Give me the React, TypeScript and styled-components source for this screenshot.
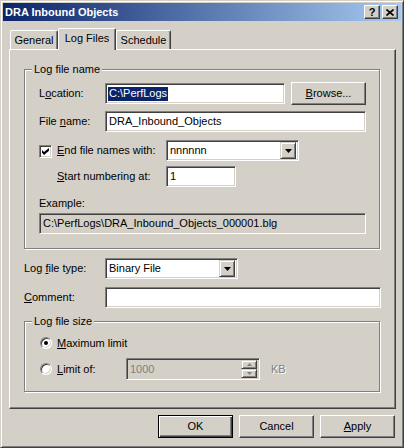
import React from 'react';
import styled, { createGlobalStyle } from 'styled-components';

const GlobalStyle = createGlobalStyle`
    html, body {
        margin: 0;
        padding: 0;
        background: #d4d0c8;
    }
    body {
        font-family: "Liberation Sans", Arial, sans-serif;
        font-size: 11px;
        color: #000;
    }
    * {
        box-sizing: border-box;
    }
`;

const Window = styled.div`
    width: 404px;
    height: 448px;
    padding: 2px;
    background: #d4d0c8;
    border: 1px solid;
    border-color: #d4d0c8 #404040 #404040 #d4d0c8;
    box-shadow: inset 1px 1px 0 #fff, inset -1px -1px 0 #808080;
    display: flex;
    flex-direction: column;
`;

const TitleBar = styled.div`
    height: 18px;
    padding: 0 3px 0 2px;
    display: flex;
    align-items: center;
    background: linear-gradient(to right, #0a246a, #a6caf0);
`;

const Title = styled.span`
    color: #fff;
    font-weight: bold;
    font-size: 11px;
    line-height: 13px;
`;

const CaptionButtons = styled.div`
    margin-left: auto;
    display: flex;
    gap: 2px;
`;

const CaptionButton = styled.div`
    width: 16px;
    height: 14px;
    background: #d4d0c8;
    border: 1px solid;
    border-color: #fff #404040 #404040 #fff;
    box-shadow: inset -1px -1px 0 #808080;
    display: flex;
    align-items: center;
    justify-content: center;
    font-weight: bold;
    font-size: 11px;
    line-height: 10px;
`;

const Body = styled.div`
    padding: 7px 5px 0 6px;
    display: flex;
    flex-direction: column;
`;

const TabStrip = styled.div`
    height: 21px;
    padding-left: 1px;
    display: flex;
    align-items: flex-end;
    position: relative;
    z-index: 1;
`;

const Tab = styled.div<{ $w: number; $active?: boolean }>`
    width: ${p => p.$w}px;
    height: ${p => (p.$active ? 22 : 19)}px;
    margin-bottom: ${p => (p.$active ? -1 : 0)}px;
    padding-top: 3px;
    background: #d4d0c8;
    border-top: 1px solid #fff;
    border-left: 1px solid #fff;
    border-right: 1px solid #404040;
    box-shadow: inset -1px 0 0 #808080;
    border-radius: 2px 2px 0 0;
    text-align: center;
    line-height: 13px;
`;

const TabPanel = styled.div`
    height: 360px;
    padding: 19px 0 0 14px;
    border: 1px solid;
    border-color: #fff #404040 #404040 #fff;
    box-shadow: inset -1px -1px 0 #808080;
    display: flex;
    flex-direction: column;
`;

const GroupBox = styled.div<{ $h: number }>`
    position: relative;
    width: 356px;
    height: ${p => p.$h}px;
    padding: 12px 0 0 14px;
    border: 1px solid #808080;
    box-shadow: inset 1px 1px 0 #fff, 1px 1px 0 #fff;
    display: flex;
    flex-direction: column;
`;

const GroupLegend = styled.span`
    position: absolute;
    top: -7px;
    left: 7px;
    padding: 0 2px;
    background: #d4d0c8;
    line-height: 13px;
`;

const Row = styled.div<{ $h: number; $mt?: number; $ml?: number }>`
    height: ${p => p.$h}px;
    margin-top: ${p => p.$mt ?? 0}px;
    margin-left: ${p => p.$ml ?? 0}px;
    display: flex;
    align-items: center;
    flex-shrink: 0;
`;

const Label = styled.span<{ $w?: number; $ml?: number; $disabled?: boolean }>`
    width: ${p => (p.$w ? `${p.$w}px` : 'auto')};
    margin-left: ${p => p.$ml ?? 0}px;
    line-height: 13px;
    white-space: nowrap;
    flex-shrink: 0;
    color: ${p => (p.$disabled ? '#808080' : '#000')};
    text-shadow: ${p => (p.$disabled ? '1px 1px 0 #fff' : 'none')};
`;

const Accel = styled.u`
    text-underline-offset: 1px;
`;

const TextBox = styled.div<{ $w: number; $h?: number; $disabled?: boolean }>`
    width: ${p => p.$w}px;
    height: ${p => p.$h ?? 21}px;
    padding: 0 3px;
    flex-shrink: 0;
    background: ${p => (p.$disabled ? '#d4d0c8' : '#fff')};
    color: ${p => (p.$disabled ? '#808080' : '#000')};
    border: 1px solid;
    border-color: #808080 #fff #fff #808080;
    box-shadow: inset 1px 1px 0 #404040, inset -1px -1px 0 #d4d0c8;
    display: flex;
    align-items: center;
    line-height: 13px;
    white-space: nowrap;
    overflow: hidden;
`;

const Selection = styled.span`
    margin-left: -1px;
    padding: 0 1px 1px;
    background: #0a246a;
    color: #fff;
    line-height: 13px;
`;

const ComboBox = styled(TextBox)`
    padding-right: 2px;
`;

const ComboText = styled.span`
    flex: 1;
`;

const ArrowButton = styled.div<{ $w: number; $h: number }>`
    width: ${p => p.$w}px;
    height: ${p => p.$h}px;
    flex-shrink: 0;
    background: #d4d0c8;
    border: 1px solid;
    border-color: #d4d0c8 #404040 #404040 #d4d0c8;
    box-shadow: inset 1px 1px 0 #fff, inset -1px -1px 0 #808080;
    display: flex;
    align-items: center;
    justify-content: center;
`;

const SpinStack = styled.div`
    margin-left: auto;
    margin-right: -1px;
    display: flex;
    flex-direction: column;
`;

const CheckBox = styled.div`
    width: 13px;
    height: 13px;
    flex-shrink: 0;
    margin-top: 2px;
    background: #fff;
    border: 1px solid;
    border-color: #808080 #fff #fff #808080;
    box-shadow: inset 1px 1px 0 #404040, inset -1px -1px 0 #d4d0c8;
    display: flex;
    align-items: center;
    justify-content: center;
`;

const Radio = styled.div<{ $checked?: boolean }>`
    width: 12px;
    height: 12px;
    flex-shrink: 0;
    border-radius: 50%;
    background: #fff;
    border: 1px solid;
    border-color: #808080 #fff #fff #808080;
    box-shadow: inset 1px 1px 0 #404040, inset -1px -1px 0 #d4d0c8;
    display: flex;
    align-items: center;
    justify-content: center;

    &::after {
        content: '';
        width: 4px;
        height: 4px;
        border-radius: 50%;
        background: ${p => (p.$checked ? '#000' : 'transparent')};
    }
`;

const PushButton = styled.div<{ $w?: number; $default?: boolean; $ml?: number }>`
    width: ${p => p.$w ?? 75}px;
    height: 23px;
    margin-left: ${p => p.$ml ?? 0}px;
    flex-shrink: 0;
    background: #d4d0c8;
    border: 1px solid;
    border-color: ${p => (p.$default ? '#000' : '#fff #404040 #404040 #fff')};
    box-shadow: ${p =>
        p.$default
            ? 'inset 1px 1px 0 #fff, inset -1px -1px 0 #404040, inset -2px -2px 0 #808080'
            : 'inset -1px -1px 0 #808080'};
    display: flex;
    align-items: center;
    justify-content: center;
    line-height: 13px;
`;

const ButtonBar = styled.div`
    margin-top: 6px;
    padding-right: 1px;
    display: flex;
    justify-content: flex-end;
    gap: 6px;
`;

const DownArrow = () => (
    <svg width="7" height="4" viewBox="0 0 7 4">
        <path d="M0 0h7L3.5 4z" fill="#000" />
    </svg>
);

const SmallArrow = ({ up }: { up?: boolean }) => (
    <svg width="5" height="3" viewBox="0 0 5 3">
        <path d={up ? 'M2.5 0L5 3H0z' : 'M0 0h5L2.5 3z'} fill="#808080" />
    </svg>
);

const CheckMark = () => (
    <svg width="7" height="7" viewBox="0 0 7 7">
        <path d="M0 2L2 4L7 0V2.8L2 7L0 4.8Z" fill="#000" />
    </svg>
);

const CloseGlyph = () => (
    <svg width="8" height="7" viewBox="0 0 8 7">
        <path d="M0.5 0.5L7.5 6.5M7.5 0.5L0.5 6.5" stroke="#000" strokeWidth="1.6" />
    </svg>
);

const App: React.FC = () => {
    return (
        <>
            <GlobalStyle />
            <Window>
                <TitleBar>
                    <Title>DRA Inbound Objects</Title>
                    <CaptionButtons>
                        <CaptionButton>?</CaptionButton>
                        <CaptionButton>
                            <CloseGlyph />
                        </CaptionButton>
                    </CaptionButtons>
                </TitleBar>

                <Body>
                    <TabStrip>
                        <Tab $w={48}>General</Tab>
                        <Tab $w={58} $active>Log Files</Tab>
                        <Tab $w={55}>Schedule</Tab>
                    </TabStrip>

                    <TabPanel>
                        <GroupBox $h={180}>
                            <GroupLegend>Log file name</GroupLegend>
                            <Row $h={23}>
                                <Label $w={66}>L<Accel>o</Accel>cation:</Label>
                                <TextBox $w={180}>
                                    <Selection>C:\PerfLogs</Selection>
                                </TextBox>
                                <PushButton $ml={6}>
                                    <span><Accel>B</Accel>rowse...</span>
                                </PushButton>
                            </Row>
                            <Row $h={21} $mt={6}>
                                <Label $w={66}>File <Accel>n</Accel>ame:</Label>
                                <TextBox $w={261}>DRA_Inbound_Objects</TextBox>
                            </Row>
                            <Row $h={21} $mt={8}>
                                <CheckBox>
                                    <CheckMark />
                                </CheckBox>
                                <Label $w={109} $ml={5}><Accel>E</Accel>nd file names with:</Label>
                                <ComboBox $w={133}>
                                    <ComboText>nnnnnn</ComboText>
                                    <ArrowButton $w={16} $h={17}>
                                        <DownArrow />
                                    </ArrowButton>
                                </ComboBox>
                            </Row>
                            <Row $h={21} $mt={5} $ml={18}>
                                <Label $w={109}><Accel>S</Accel>tart numbering at:</Label>
                                <TextBox $w={70}>1</TextBox>
                            </Row>
                            <Row $h={13} $mt={10}>
                                <Label>Example:</Label>
                            </Row>
                            <Row $h={21} $mt={3}>
                                <TextBox $w={327} $disabled style={{ color: '#000' }}>
                                    C:\PerfLogs\DRA_Inbound_Objects_000001.blg
                                </TextBox>
                            </Row>
                        </GroupBox>

                        <Row $h={21} $mt={9}>
                            <Label $w={81}>Log <Accel>f</Accel>ile type:</Label>
                            <ComboBox $w={133}>
                                <ComboText>Binary File</ComboText>
                                <ArrowButton $w={16} $h={17}>
                                    <DownArrow />
                                </ArrowButton>
                            </ComboBox>
                        </Row>
                        <Row $h={21} $mt={8}>
                            <Label $w={81}><Accel>C</Accel>omment:</Label>
                            <TextBox $w={276} />
                        </Row>

                        <GroupBox $h={71} style={{ marginTop: 13, paddingTop: 13, paddingLeft: 15 }}>
                            <GroupLegend>Log file size</GroupLegend>
                            <Row $h={16}>
                                <Radio $checked />
                                <Label $ml={5}><Accel>M</Accel>aximum limit</Label>
                            </Row>
                            <Row $h={22} $mt={7}>
                                <Radio />
                                <Label $w={69} $ml={5}><Accel>L</Accel>imit of:</Label>
                                <TextBox $w={134} $h={22} $disabled>
                                    <span>1000</span>
                                    <SpinStack>
                                        <ArrowButton $w={16} $h={9}>
                                            <SmallArrow up />
                                        </ArrowButton>
                                        <ArrowButton $w={16} $h={9}>
                                            <SmallArrow />
                                        </ArrowButton>
                                    </SpinStack>
                                </TextBox>
                                <Label $ml={11} $disabled>KB</Label>
                            </Row>
                        </GroupBox>
                    </TabPanel>

                    <ButtonBar>
                        <PushButton $default>OK</PushButton>
                        <PushButton>Cancel</PushButton>
                        <PushButton><span><Accel>A</Accel>pply</span></PushButton>
                    </ButtonBar>
                </Body>
            </Window>
        </>
    );
};

export default App;
